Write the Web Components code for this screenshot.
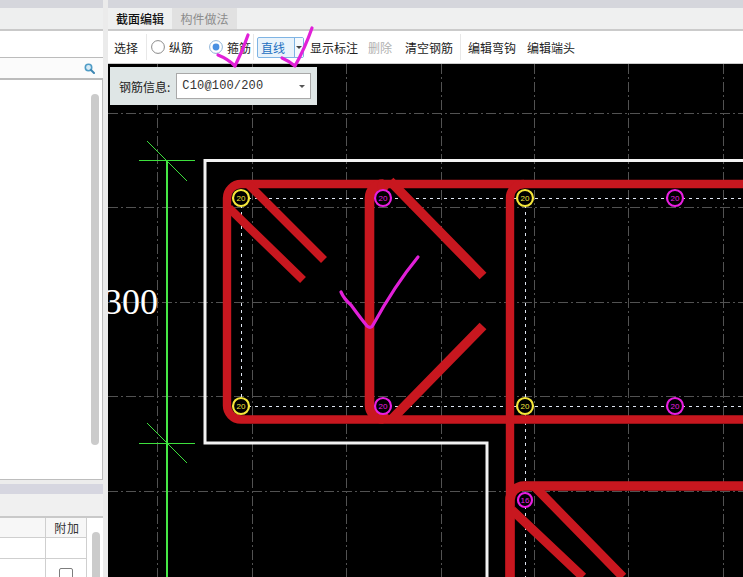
<!DOCTYPE html>
<html lang="zh">
<head>
<meta charset="utf-8">
<title>截面编辑</title>
<style>
  html, body { margin: 0; padding: 0; width: 743px; height: 577px; overflow: hidden; background: #ebebeb; }
  body { font: 12px "Noto Sans CJK SC", "Liberation Sans", sans-serif; color: #222; }
</style>
</head>
<body>
<app-shell>
  <left-panel slot="left"></left-panel>
  <section-editor slot="right"></section-editor>
</app-shell>
<script>
function def(name, html) {
  customElements.define(name, class extends HTMLElement {
    constructor() {
      super();
      this.attachShadow({ mode: 'open' }).innerHTML = typeof html === 'function' ? html(this) : html;
    }
  });
}

def('app-shell', `
<style>
  :host { display: flex; width: 743px; height: 577px; gap: 5px; background: #ebebeb; }
  ::slotted([slot=left]) { flex: 0 0 103px; }
  ::slotted([slot=right]) { flex: 1 1 0; min-width: 0; }
</style>
<slot name="left"></slot><slot name="right"></slot>`);

def('left-panel', `
<style>
  :host { display: flex; flex-direction: column; height: 577px; background: #eee; overflow: hidden; }
  .cap { height: 8px; background: #d5d6dc; flex: none; }
  .head { height: 21px; background: #eeefef; flex: none; }
  .rule { height: 2px; background: #c9c9c9; flex: none; }
  .pad { height: 26px; background: #fff; flex: none; }
  .search { height: 20px; flex: none; background: #fbfbfb; border-top: 1px solid #bcbcbc; border-bottom: 2px solid #bcbcbc;
            display: flex; align-items: center; justify-content: flex-end; padding-right: 8px; }
  .list { height: 400px; flex: none; background: #fff; border-right: 1px solid #bdbdbd; border-bottom: 1px solid #bdbdbd;
          display: flex; justify-content: flex-end; padding: 14px 3px 0 0; box-sizing: border-box; }
  .thumb { width: 8px; height: 351px; background: #cbcbcb; border-radius: 4px; }
  .gap { height: 4px; flex: none; background: #ececec; }
  .band { height: 10px; flex: none; background: #d6d6e0; }
  .light { height: 22px; flex: none; background: #f0f0f0; }
  .table { flex: 1; background: #fff; display: grid; grid-template-columns: 46px 41px 1fr; grid-template-rows: 20px 21px 1fr; }
  .table > div { box-sizing: border-box; border-bottom: 1px solid #cfcfcf; border-right: 1px solid #cfcfcf; }
  .h { background: #f7f7f7; }
  .add { display: flex; align-items: center; justify-content: center; font-size: 12px; letter-spacing: 0.8px; color: #333; padding-left: 2px; }
  .side { grid-column: 3; grid-row: 1 / 4; border: 0 !important; padding: 14px 4px 0 5px; }
  .side i { display: block; width: 8px; height: 60px; border-radius: 4px; background: #cbcbcb; }
  .chk { display: flex; justify-content: center; align-items: center; }
  .chk b { display: block; width: 14px; height: 14px; box-sizing: border-box; border: 1px solid #7d7d7d; border-radius: 2px; background: #fff; }
</style>
<div class="cap"></div><div class="head"></div><div class="rule"></div><div class="pad"></div>
<div class="search">
  <svg width="11" height="11" viewBox="0 0 11 11"><circle cx="4.5" cy="4.5" r="3.2" fill="#d7ebf6" stroke="#4f9cc6" stroke-width="1.6"/><path d="M7 7l3 3" stroke="#3d86b2" stroke-width="2" stroke-linecap="round"/></svg>
</div>
<div class="list"><div class="thumb"></div></div>
<div class="gap"></div><div class="band"></div><div class="light"></div><div class="rule"></div>
<div class="table">
  <div class="h"></div><div class="h add">附加</div><div class="side"><i></i></div>
  <div></div><div></div>
  <div></div><div class="chk"><b></b></div>
</div>`);

def('section-editor', `
<style>
  :host { display: flex; flex-direction: column; height: 577px; position: relative; overflow: hidden; }
  .cap { height: 8px; background: #d5d6dc; flex: none; }
  .rule { height: 2px; background: #cbcbcb; flex: none; }
  .pen { position: absolute; left: 0; top: 0; pointer-events: none; }
</style>
<div class="cap"></div>
<tab-bar></tab-bar>
<div class="rule"></div>
<tool-bar></tool-bar>
<cad-canvas></cad-canvas>
<svg class="pen" width="635" height="577" viewBox="108 0 635 577" fill="none" stroke="#e120d8" stroke-width="3.2" stroke-linecap="round" stroke-linejoin="round">
  <path d="M218 55Q228 59 235 66Q243 50 248 35"/>
  <path d="M282 58Q289 61 295 66Q305 48 312 28"/>
  <path d="M341 292Q344 299 351 305Q362 320 367 326Q371 329 373 325Q395 285 418 257"/>
</svg>`);

def('tab-bar', `
<style>
  :host { display: flex; height: 21px; flex: none; background: #eff0f0; font-size: 12px; }
  div { width: 64px; display: flex; align-items: center; justify-content: center; box-sizing: border-box; }
  .on { color: #111; font-weight: 500; }
  .off { color: #8c8c8c; background: #e1e1e1; width: 65px; }
</style>
<div class="on">截面编辑</div><div class="off">构件做法</div>`);

def('tool-radio', el => {
  const on = el.hasAttribute('on');
  return `
<style>
  :host { display: inline-flex; align-items: center; gap: 4px; }
  svg { display: block; }
</style>
<svg width="14" height="14" viewBox="0 0 14 14">
  <circle cx="7" cy="7" r="6.4" fill="#fff" stroke="${on ? '#8fb4d8' : '#8a8a8a'}"/>
  ${on ? '<circle cx="7" cy="7" r="3.4" fill="#4a90e2"/>' : ''}
</svg><slot></slot>`;
});

def('tool-bar', `
<style>
  :host { display: flex; align-items: center; height: 32px; flex: none; background: #fff; border-bottom: 1px solid #cbcbcb;
          font-size: 12px; color: #222; padding-left: 6px; }
  .sep { width: 1px; height: 26px; background: #e8e8e8; }
  .combo { display: flex; align-items: center; width: 47px; height: 21px; box-sizing: border-box; border: 1px solid #7fb4e4; border-radius: 2px;
           background: #e9f3fb; color: #1c6fc0; }
  .combo span { width: 36px; padding-left: 3px; box-sizing: border-box; }
  .combo em { flex: 1; height: 100%; border-left: 1px solid #7fb4e4; background: #f4f9fd; display: flex; align-items: center; justify-content: center; }
  .combo em::after { content: ""; border: 3px solid transparent; border-top: 3px solid #444; border-bottom: 0; }
  .dim { color: #b0b0b0; }
</style>
<span>选择</span>
<div class="sep" style="margin-left:8px"></div>
<tool-radio style="margin-left:4px">纵筋</tool-radio>
<tool-radio on style="margin-left:16px">箍筋</tool-radio>
<div class="sep" style="margin-left:2px"></div>
<div class="combo" style="margin-left:3px"><span>直线</span><em></em></div>
<span style="margin-left:6px">显示标注</span>
<span class="dim" style="margin-left:10px">删除</span>
<span style="margin-left:13px">清空钢筋</span>
<div class="sep" style="margin-left:7px"></div>
<span style="margin-left:7px">编辑弯钩</span>
<span style="margin-left:11px">编辑端头</span>`);

def('rebar-info', `
<style>
  :host { display: flex; align-items: center; position: absolute; left: 2px; top: 3px; width: 207px; height: 38px; box-sizing: border-box;
          background: #dfe6e6; padding-left: 9px; font-size: 12px; color: #222; }
  .sel { margin-left: 6px; width: 135px; height: 26px; box-sizing: border-box; background: #fff; border: 1px solid #a9a9a9;
         display: flex; align-items: center; justify-content: space-between; padding: 0 5px 0 5px;
         font: 12px "Liberation Mono", monospace; letter-spacing: .16px; color: #333; }
  .sel::after { content: ""; border: 3px solid transparent; border-top: 3px solid #555; border-bottom: 0; }
</style>
<span>钢筋信息:</span><div class="sel">C10@100/200</div>`);

const grid = [157,252,346,441,534,628,723].map(x => `<line x1="${x}.5" y1="64" x2="${x}.5" y2="577"/>`).join('')
           + [113,207,302,396,491].map(y => `<line x1="108" y1="${y}.5" x2="743" y2="${y}.5"/>`).join('');
const dots = [
  [241,198,'#f5e63a','20'],[241,406,'#f5e63a','20'],[525,198,'#f5e63a','20'],[525,406,'#f5e63a','20'],
  [383,198,'#e81ee0','20'],[383,406,'#e81ee0','20'],[675,198,'#e81ee0','20'],[675,406,'#e81ee0','20'],
  [525,500,'#e81ee0','16']
].map(([x,y,c,t]) => `<circle cx="${x}" cy="${y}" r="${t==='16'?7:8}" fill="#000" stroke="${c}" stroke-width="2.2"/>
  <text x="${x}" y="${y+2.5}" fill="${c}" font-family="Liberation Sans" font-size="8" text-anchor="middle">${t}</text>`).join('');

def('cad-canvas', `
<style>
  :host { display: block; flex: 1; position: relative; background: #000; overflow: hidden; }
  svg { display: block; position: absolute; left: 0; top: 0; }
</style>
<svg width="635" height="513" viewBox="108 64 635 513" fill="none">
  <g stroke="#525252" stroke-width="1" stroke-dasharray="10 3 2 3" shape-rendering="crispEdges">${grid}</g>
  <path stroke="#f2f2f2" stroke-width="3" d="M743 160.5H205V443H487V577"/>
  <rect x="166" y="160" width="2" height="417" fill="#46e846"/>
  <g stroke="#3de03d" stroke-width="1">
    <line x1="139" y1="160.5" x2="195" y2="160.5" shape-rendering="crispEdges"/>
    <line x1="139" y1="443.5" x2="195" y2="443.5" shape-rendering="crispEdges"/>
    <path d="M147 141L187 181M147 423L187 463"/>
  </g>
  <text x="104" y="314" fill="#fff" font-family="Liberation Serif" font-size="36">300</text>
  <g stroke="#dfe6f2" stroke-width="1" stroke-dasharray="3 4" shape-rendering="crispEdges">
    <path d="M241 198.5H743M241 406.5H743M241.5 198V406M525.5 198V577"/>
  </g>
  <g stroke="#c8171f" stroke-width="8.4">
    <path d="M743 184H241A14 14 0 0 0 227 198V405A14 14 0 0 0 241 419.5H743"/>
    <path d="M249 185L324 260M229 208L303 280"/>
    <path stroke-width="9.6" d="M369.5 198A14 14 0 0 1 383.5 184M369.5 198V405A14 14 0 0 0 383.5 419"/>
    <circle cx="383" cy="186" r="6" fill="#c8171f" stroke="none"/>
    <circle cx="383" cy="417" r="6" fill="#c8171f" stroke="none"/>
    <path stroke-width="9.6" d="M390 181L483 276M392 419L483 326"/>
    <path d="M510 198A14 14 0 0 1 524 184M510 198V577"/>
    <path stroke-width="9.6" d="M510 500A14 14 0 0 1 524 486H743M510 500V577"/>
    <path stroke-width="9" d="M535 487L623 577M512 510L583 577"/>
  </g>
  ${dots}
</svg>
<rebar-info></rebar-info>`);
</script>
</body>
</html>
